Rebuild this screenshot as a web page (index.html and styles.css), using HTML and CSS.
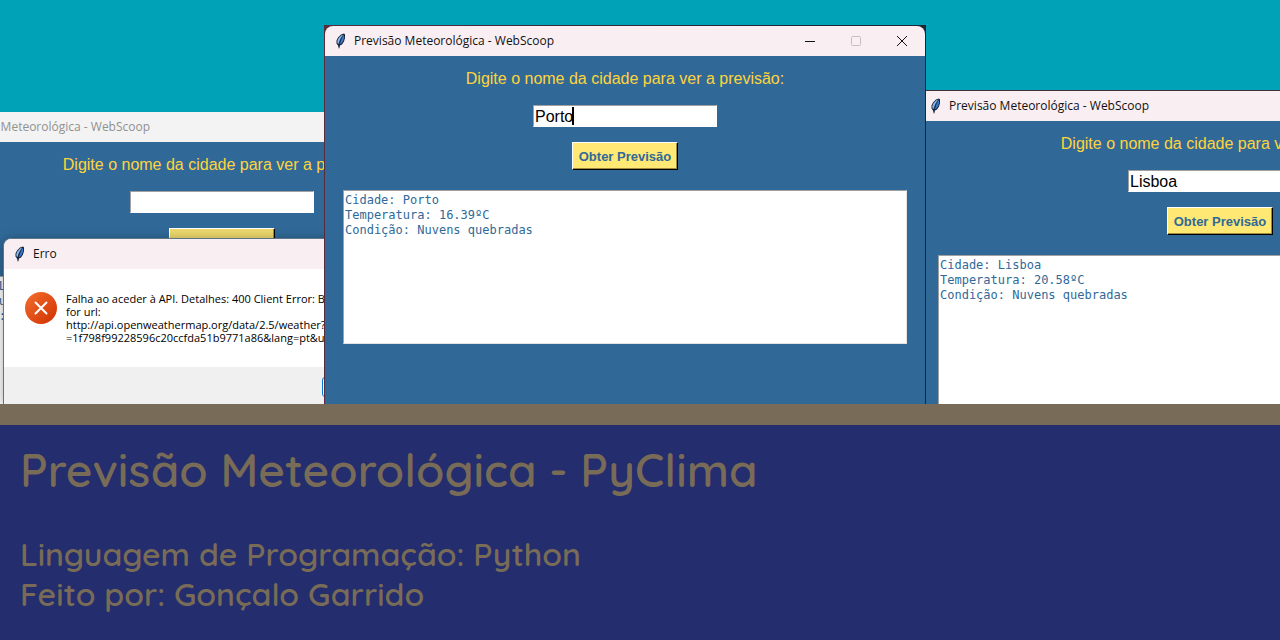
FILE: index.html
```html
<!DOCTYPE html>
<html lang="pt">
<head>
<meta charset="utf-8">
<title>Previsão Meteorológica - PyClima</title>
<link rel="stylesheet" href="styles.css">
</head>
<body>
<svg class="defs" aria-hidden="true">
  <symbol id="feather" viewBox="0 0 10 16">
    <path d="M8.5 .5 9.5 1.500 9.500 5 8.500 8.500 6.500 11.500 4.500 12.500 3.500 15.500 2.500 12.500 1 10.500 1 7.500 2.500 4.500 5.500 1.500Z" fill="#15202f"/>
    <path d="M8.200 1.500 8.700 4.500 7.700 8 5.700 10.800 4.300 11.300 6.200 5.500Z" fill="#3978cc"/>
    <path d="M7.700 1.500 5.500 2.500 3 5.300 1.800 8 2 10.500 3 10.900 4.700 6.500Z" fill="#8bb8ee"/>
    <path d="M7.500 2.500 5.500 5.500 4 9.500 3.500 15.500" fill="none" stroke="#1c3e70" stroke-width=".6"/>
  </symbol>
</svg>
<main class="desktop">
  <section class="window window-back">
    <header class="titlebar"><svg class="feather"><use href="#feather"/></svg><span>Previsão Meteorológica - WebScoop</span></header>
    <form class="panel">
      <label class="prompt" for="city-back">Digite o nome da cidade para ver a previsão:</label>
      <div class="field"><input class="entry" id="city-back" type="text"></div>
      <button class="fetch" type="button">Obter Previsão</button>
      <output class="result">Cidade: Lisboa
Temperatura: 20.58ºC
Condição: Nuvens quebradas</output>
    </form>
  </section>

  <section class="window window-lisboa">
    <header class="titlebar"><svg class="feather"><use href="#feather"/></svg><span>Previsão Meteorológica - WebScoop</span></header>
    <form class="panel">
      <label class="prompt" for="city-lisboa">Digite o nome da cidade para ver a previsão:</label>
      <div class="field"><input class="entry" id="city-lisboa" type="text" value="Lisboa"></div>
      <button class="fetch" type="button">Obter Previsão</button>
      <output class="result">Cidade: Lisboa
Temperatura: 20.58ºC
Condição: Nuvens quebradas</output>
    </form>
  </section>

  <section class="dialog">
    <header class="titlebar"><svg class="feather"><use href="#feather"/></svg><span>Erro</span></header>
    <div class="message">
      <svg class="error-icon" viewBox="0 0 32 32">
        <defs><linearGradient id="red" x1="0" y1="0" x2="1" y2="1"><stop offset="0" stop-color="#f4702f"/><stop offset="1" stop-color="#cf2f00"/></linearGradient></defs>
        <circle cx="16" cy="16" r="16" fill="url(#red)"/>
        <path d="M10.500 10.500 21.500 21.500M21.500 10.500 10.500 21.500" stroke="#fff" stroke-width="2" stroke-linecap="round"/>
      </svg>
      <p class="message-text">Falha ao aceder à API. Detalhes: 400 Client Error: Bad Request<br>for url:<br>http://api.openweathermap.org/data/2.5/weather?q=&amp;appid<br>=1f798f99228596c20ccfda51b9771a86&amp;lang=pt&amp;units=metric</p>
    </div>
    <footer class="dialog-actions"><button class="ok" type="button">OK</button></footer>
  </section>

  <section class="window window-porto">
    <header class="titlebar">
      <svg class="feather"><use href="#feather"/></svg><span>Previsão Meteorológica - WebScoop</span>
      <div class="controls">
        <button class="control" type="button" aria-label="Minimizar"><svg viewBox="0 0 12 12"><path d="M1 6.500H11"/></svg></button>
        <button class="control" type="button" aria-label="Maximizar" disabled><svg viewBox="0 0 12 12"><rect x="1.500" y="1.500" width="9" height="9" rx="1"/></svg></button>
        <button class="control" type="button" aria-label="Fechar"><svg viewBox="0 0 12 12"><path d="M1 1 11 11M11 1 1 11"/></svg></button>
      </div>
    </header>
    <form class="panel">
      <label class="prompt" for="city-porto">Digite o nome da cidade para ver a previsão:</label>
      <div class="field"><input class="entry" id="city-porto" type="text" value="Porto"><span class="caret"></span></div>
      <button class="fetch" type="button">Obter Previsão</button>
      <output class="result">Cidade: Porto
Temperatura: 16.39ºC
Condição: Nuvens quebradas</output>
    </form>
  </section>
</main>
<footer class="caption">
  <h1 class="caption-title">Previsão Meteorológica - PyClima</h1>
  <p class="caption-text">Linguagem de Programação: Python<br>Feito por: Gonçalo Garrido</p>
</footer>
</body>
</html>
```
FILE: styles.css
```css
* { box-sizing: border-box; }

body {
  margin: 0;
  min-height: 100vh;
  display: flex;
  flex-direction: column;
  background: #242d6d;
  font-family: "Open Sans", "Noto Sans", sans-serif;
}

.defs { position: absolute; width: 0; height: 0; }

/* Desktop and its windows */
.desktop {
  position: relative;
  flex: 1;
  min-height: 400px;
  overflow: hidden;
  background: #00a2b8;
}

.window {
  position: absolute;
  bottom: 0;
  width: 602px;
  padding: 0 1px;
  display: flex;
  flex-direction: column;
  background: #306998;
}

.window-back { left: calc(50% - 719px); top: 112px; padding: 0; }
.window-lisboa { left: calc(50% + 279px); top: 90px; padding-top: 1px; background: #40303c; }
.window-porto {
  left: calc(50% - 316px);
  top: 25px;
  padding-top: 1px;
  background: linear-gradient(90deg, #582c3c, #202434 80%);
}

.titlebar {
  display: flex;
  flex: none;
  align-items: center;
  height: 30px;
  padding-left: 10px;
  gap: 8px;
  background: #f9eff3;
  color: #111;
  font-size: 12px;
  line-height: 16px;
  white-space: nowrap;
}

.window-back .titlebar { background: #f3f3f3; color: #919191; }
.window-porto .titlebar { border-radius: 8px 8px 0 0; }

.feather { width: 11px; height: 16px; flex: none; }

.controls { display: flex; margin-left: auto; }

.control {
  width: 46px;
  height: 30px;
  padding: 0;
  border: 0;
  background: none;
  color: #111;
}

.control:disabled { color: #c4bec0; }

.control svg {
  display: block;
  width: 12px;
  height: 12px;
  margin: 0 auto;
  fill: none;
  stroke: currentColor;
}

.panel {
  flex: 1;
  display: flex;
  flex-direction: column;
  align-items: center;
  padding: 13px 18px;
  background: #306998;
}

.prompt {
  margin-bottom: 16px;
  color: #ffd43b;
  font: 16px/20px "Liberation Sans", Arial, sans-serif;
  white-space: nowrap;
}

.field { position: relative; margin-bottom: 15px; }

.entry {
  display: block;
  width: 184px;
  height: 22px;
  padding: 1px 1px 0;
  border: 1px solid #fff;
  border-top-color: #a0a0a0;
  border-left-color: #a0a0a0;
  border-radius: 0;
  background: #fff;
  color: #000;
  font: 16px/19px "Liberation Sans", Arial, sans-serif;
}

.caret {
  position: absolute;
  left: 39px;
  top: 2px;
  width: 2px;
  height: 18px;
  background: #000;
}

.fetch {
  width: 106px;
  height: 28px;
  margin-bottom: 20px;
  padding: 1px 0 0;
  border: 1px solid #000;
  border-top-color: #fff;
  border-left-color: #fff;
  box-shadow: inset -1px -1px #a08c3c;
  background: #ffe873;
  color: #306998;
  font: bold 13px/16px "Liberation Sans", Arial, sans-serif;
  white-space: nowrap;
}

.window-back .fetch { background: #ecd86c; }

.result {
  display: block;
  align-self: stretch;
  height: 154px;
  padding: 2px 1px;
  border: 1px solid #e3e3e3;
  border-top-color: #a0a0a0;
  border-left-color: #a0a0a0;
  background: #fff;
  color: #306998;
  font: 12px/15px "DejaVu Sans Mono", monospace;
  white-space: pre;
}

.dialog {
  position: absolute;
  left: calc(50% - 637px);
  top: 238px;
  bottom: 0;
  width: 380px;
  display: flex;
  flex-direction: column;
  border: 1px solid #5f7588;
  border-bottom: 0;
  border-radius: 8px 8px 0 0;
  overflow: hidden;
  background: #f0f0f0;
  box-shadow: 0 2px 12px rgba(0, 0, 0, .35);
}

.message {
  display: flex;
  gap: 9px;
  padding: 23px 21px;
  background: #fff;
}

.error-icon { width: 32px; height: 32px; flex: none; }

.message-text {
  margin: 0;
  color: #000;
  font-size: 11px;
  line-height: 13px;
  white-space: nowrap;
}

.dialog-actions { padding: 10px 0 0 318px; }

.ok {
  display: block;
  width: 60px;
  height: 20px;
  padding: 0;
  border: 1px solid #0078d4;
  border-radius: 3px;
  background: #fdfdfd;
  font: 11px/13px "Open Sans", sans-serif;
}

/* Project caption */
.caption {
  padding: 15px 20px 26px;
  border-top: 21px solid #786b57;
  background: #242d6d;
  color: #786b57;
  font-family: Quicksand, "DejaVu Sans", sans-serif;
}

.caption-title {
  margin: 0 0 34px;
  font-size: 46px;
  font-weight: 600;
  line-height: 60px;
}

.caption-text {
  margin: 0;
  font-size: 32px;
  font-weight: 600;
  line-height: 40px;
}
```
